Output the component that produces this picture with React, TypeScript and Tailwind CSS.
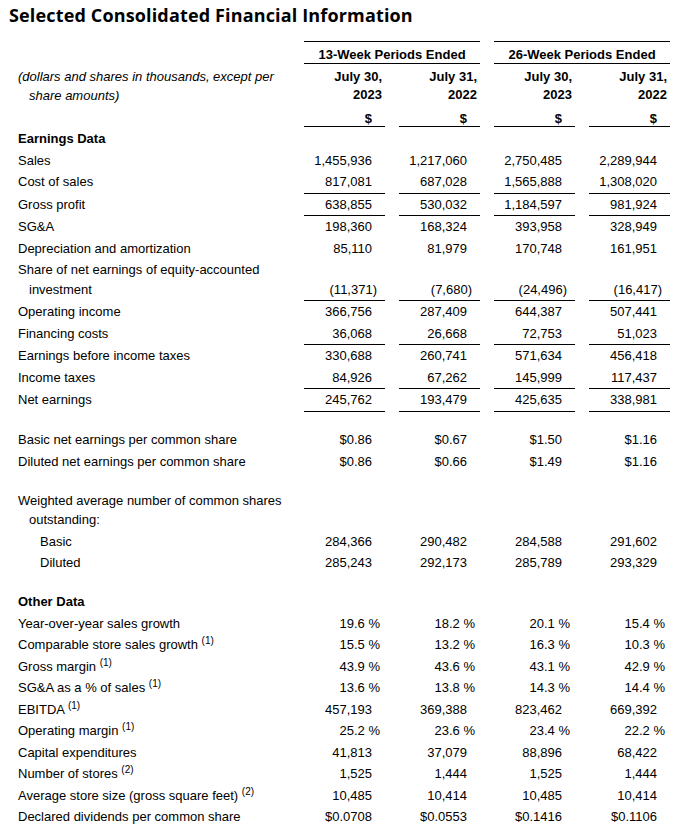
import React from "react";

type Row =
  | { type: "blank" }
  | { type: "section"; label: string; extraTop?: boolean }
  | {
      type: "data";
      label: React.ReactNode;
      vals?: string[];
      rule?: boolean;
      indent?: 0 | 1 | 2;
      wrap?: boolean;
    };

const Sup = ({ n }: { n: number }) => (
  <>
    {" "}
    <sup className="text-[10px]">({n})</sup>
  </>
);

const rows: Row[] = [
  { type: "section", label: "Earnings Data", extraTop: true },
  { type: "data", label: "Sales", vals: ["1,455,936", "1,217,060", "2,750,485", "2,289,944"] },
  { type: "data", label: "Cost of sales", vals: ["817,081", "687,028", "1,565,888", "1,308,020"], rule: true },
  { type: "data", label: "Gross profit", vals: ["638,855", "530,032", "1,184,597", "981,924"], rule: true },
  { type: "data", label: "SG&A", vals: ["198,360", "168,324", "393,958", "328,949"] },
  { type: "data", label: "Depreciation and amortization", vals: ["85,110", "81,979", "170,748", "161,951"] },
  {
    type: "data",
    label: "Share of net earnings of equity-accounted investment",
    vals: ["(11,371)", "(7,680)", "(24,496)", "(16,417)"],
    rule: true,
    wrap: true,
  },
  { type: "data", label: "Operating income", vals: ["366,756", "287,409", "644,387", "507,441"] },
  { type: "data", label: "Financing costs", vals: ["36,068", "26,668", "72,753", "51,023"], rule: true },
  { type: "data", label: "Earnings before income taxes", vals: ["330,688", "260,741", "571,634", "456,418"] },
  { type: "data", label: "Income taxes", vals: ["84,926", "67,262", "145,999", "117,437"], rule: true },
  { type: "data", label: "Net earnings", vals: ["245,762", "193,479", "425,635", "338,981"], rule: true },
  { type: "blank" },
  { type: "data", label: "Basic net earnings per common share", vals: ["$0.86", "$0.67", "$1.50", "$1.16"] },
  { type: "data", label: "Diluted net earnings per common share", vals: ["$0.86", "$0.66", "$1.49", "$1.16"] },
  { type: "blank" },
  { type: "data", label: "Weighted average number of common shares outstanding:", wrap: true },
  { type: "data", label: "Basic", vals: ["284,366", "290,482", "284,588", "291,602"], indent: 2 },
  { type: "data", label: "Diluted", vals: ["285,243", "292,173", "285,789", "293,329"], indent: 2 },
  { type: "blank" },
  { type: "section", label: "Other Data" },
  { type: "data", label: "Year-over-year sales growth", vals: ["19.6 %", "18.2 %", "20.1 %", "15.4 %"] },
  {
    type: "data",
    label: (
      <>
        Comparable store sales growth
        <Sup n={1} />
      </>
    ),
    vals: ["15.5 %", "13.2 %", "16.3 %", "10.3 %"],
  },
  {
    type: "data",
    label: (
      <>
        Gross margin
        <Sup n={1} />
      </>
    ),
    vals: ["43.9 %", "43.6 %", "43.1 %", "42.9 %"],
  },
  {
    type: "data",
    label: (
      <>
        SG&amp;A as a % of sales
        <Sup n={1} />
      </>
    ),
    vals: ["13.6 %", "13.8 %", "14.3 %", "14.4 %"],
  },
  {
    type: "data",
    label: (
      <>
        EBITDA
        <Sup n={1} />
      </>
    ),
    vals: ["457,193", "369,388", "823,462", "669,392"],
  },
  {
    type: "data",
    label: (
      <>
        Operating margin
        <Sup n={1} />
      </>
    ),
    vals: ["25.2 %", "23.6 %", "23.4 %", "22.2 %"],
  },
  { type: "data", label: "Capital expenditures", vals: ["41,813", "37,079", "88,896", "68,422"] },
  {
    type: "data",
    label: (
      <>
        Number of stores
        <Sup n={2} />
      </>
    ),
    vals: ["1,525", "1,444", "1,525", "1,444"],
  },
  {
    type: "data",
    label: (
      <>
        Average store size (gross square feet)
        <Sup n={2} />
      </>
    ),
    vals: ["10,485", "10,414", "10,485", "10,414"],
  },
  { type: "data", label: "Declared dividends per common share", vals: ["$0.0708", "$0.0553", "$0.1416", "$0.1106"] },
];

function valuePad(v: string) {
  if (v.endsWith("%")) return "pr-[5px]";
  if (v.endsWith(")")) return "pr-[8px]";
  return "pr-[13px]";
}

function DataRow({ row }: { row: Extract<Row, { type: "data" }> }) {
  const indentCls =
    row.indent === 2 ? "pl-[40px]" : row.wrap ? "pl-[29px] -indent-[11px]" : "pl-[18px]";
  const border = row.rule ? "border-b border-black" : "";
  const labelBorder = row.rule ? "border-b border-transparent" : "";
  return (
    <div className="flex">
      <div className={`w-[304px] shrink-0 py-px leading-[19.5px] pr-[10px] ${indentCls} ${labelBorder}`}>
        {row.label}
      </div>
      {row.vals && (
        <div className="flex gap-[14px] items-end">
          {row.vals.map((v, i) => (
            <div
              key={i}
              className={`w-[81px] text-right py-px leading-[19.5px] whitespace-nowrap ${valuePad(v)} ${border}`}
            >
              {v}
            </div>
          ))}
        </div>
      )}
    </div>
  );
}

function GroupHeader({ title, cols }: { title: string; cols: [string, string][] }) {
  return (
    <div className="w-[176px] border-t border-black">
      <div className="text-center font-bold pt-[4px] leading-[17px] border-b border-black whitespace-nowrap">
        {title}
      </div>
      <div className="flex gap-[14px]">
        {cols.map(([a, b], i) => (
          <div key={i} className="w-[81px]">
            <div className="text-right font-bold pr-[3px] pt-[4px] leading-[18px]">
              {a}
              <br />
              {b}
            </div>
            <div className="text-right font-bold pr-[13px] pt-[8px] leading-[14px] border-b border-black">$</div>
          </div>
        ))}
      </div>
    </div>
  );
}

export default function App() {
  return (
    <div className="w-[677px] min-h-[839px] bg-white text-black font-['Liberation_Sans',Arial,sans-serif] text-[13px]">
      <h1 className="font-['Open_Sans',sans-serif] font-bold text-[18px] tracking-[0.15px] leading-[22px] pl-[9px] pt-[4px] whitespace-nowrap">
        Selected Consolidated Financial Information
      </h1>
      <div className="mt-[15px] flex">
        <div className="w-[304px] shrink-0 pl-[29px] -indent-[11px] pr-[10px] pt-[26px] italic leading-[19px]">
          (dollars and shares in thousands, except per share amounts)
        </div>
        <div className="flex gap-[14px]">
          <GroupHeader
            title="13-Week Periods Ended"
            cols={[
              ["July 30,", "2023"],
              ["July 31,", "2022"],
            ]}
          />
          <GroupHeader
            title="26-Week Periods Ended"
            cols={[
              ["July 30,", "2023"],
              ["July 31,", "2022"],
            ]}
          />
        </div>
      </div>
      <div>
        {rows.map((r, i) => {
          if (r.type === "blank") return <div key={i} className="h-[17.5px]" />;
          if (r.type === "section")
            return (
              <div
                key={i}
                className={`pl-[18px] font-bold leading-[19.5px] pb-px ${r.extraTop ? "pt-[2px]" : "pt-px"}`}
              >
                {r.label}
              </div>
            );
          return <DataRow key={i} row={r} />;
        })}
      </div>
    </div>
  );
}
